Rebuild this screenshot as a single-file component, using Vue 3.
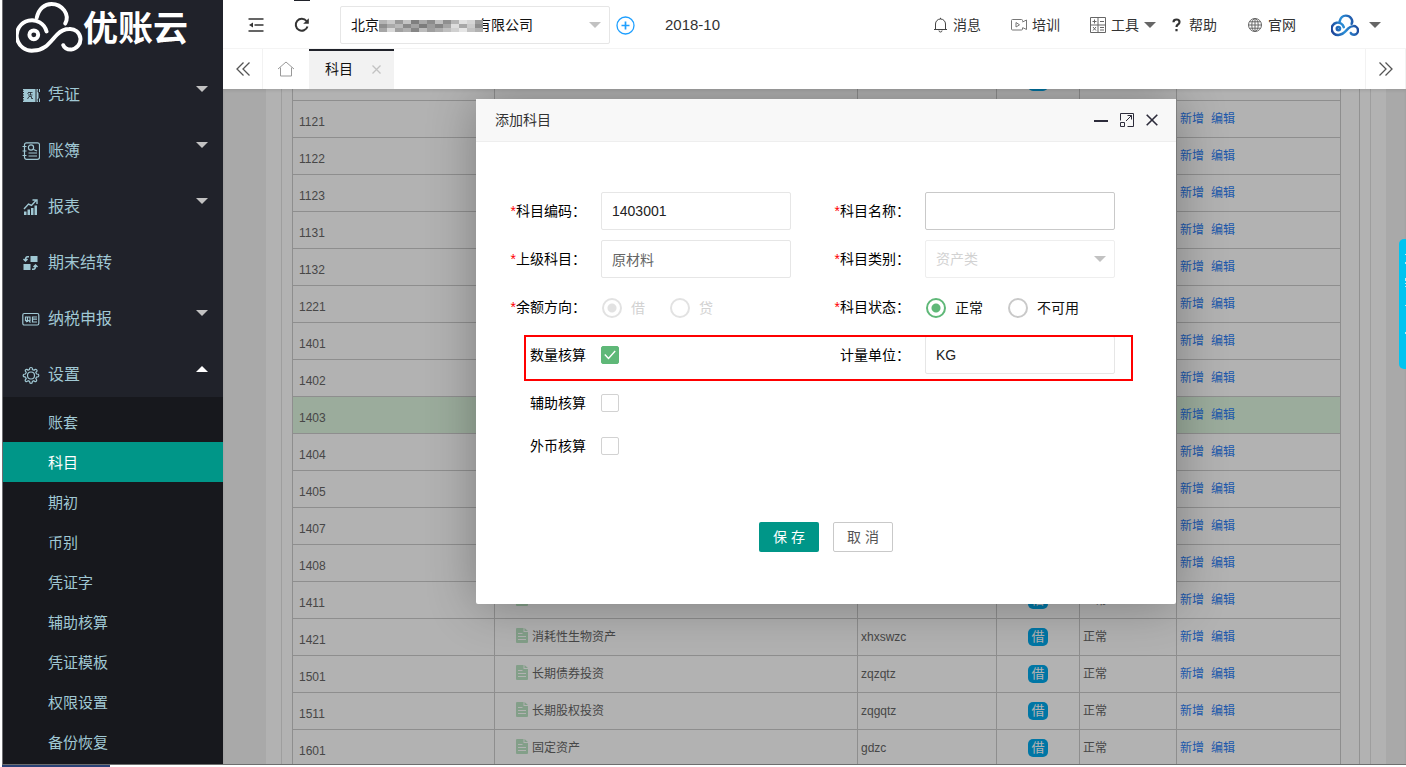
<script setup>
import { ref } from 'vue'

const menus = [
  { name: '凭证', icon: 'voucher', arrow: 'down' },
  { name: '账簿', icon: 'ledger', arrow: 'down' },
  { name: '报表', icon: 'report', arrow: 'down' },
  { name: '期末结转', icon: 'transfer', arrow: '' },
  { name: '纳税申报', icon: 'tax', arrow: 'down' },
  { name: '设置', icon: 'gear', arrow: 'up' }
]
const submenus = ['账套', '科目', '期初', '币别', '凭证字', '辅助核算', '凭证模板', '权限设置', '备份恢复']

const rows = [
  ['', '', ''],
  ['1121', '', ''],
  ['1122', '', ''],
  ['1123', '', ''],
  ['1131', '', ''],
  ['1132', '', ''],
  ['1221', '', ''],
  ['1401', '', ''],
  ['1402', '', ''],
  ['1403', '', ''],
  ['1404', '', ''],
  ['1405', '', ''],
  ['1407', '', ''],
  ['1408', '', ''],
  ['1411', '', ''],
  ['1421', '消耗性生物资产', 'xhxswzc'],
  ['1501', '长期债券投资', 'zqzqtz'],
  ['1511', '长期股权投资', 'zqgqtz'],
  ['1601', '固定资产', 'gdzc']
]

const mosaic = [
  '#b4b4b4', '#c9c9c9', '#999999', '#c4c4c4', '#7f7f7f', '#a9a9a9', '#8c8c8c', '#c0c0c0', '#8f8f8f', '#b5b5b5', '#e2e2e2', '#d6d6d6', '#9d9d9d',
  '#8f8f8f', '#aaaaaa', '#b9b9b9', '#8a8a8a', '#a2a2a2', '#7c7c7c', '#9b9b9b', '#858585', '#a5a5a5', '#dddddd', '#a8a8a8', '#cccccc', '#8d8d8d',
  '#a6a6a6', '#d8d8d8', '#a0a0a0', '#b0b0b0', '#868686', '#bcbcbc', '#9e9e9e', '#adadad', '#bfbfbf', '#d0d0d0', '#e6e6e6', '#c2c2c2', '#b1b1b1'
]

const code = ref('1403001')
const title = ref('')
const parent = ref('原材料')
const unit = ref('KG')
const direction = ref('debit')
const status = ref('normal')
const useQty = ref(true)
const useAux = ref(false)
const useFx = ref(false)
</script>

<template>
  <div class="desktop">
    <div class="window">
      <aside class="sidebar">
        <a class="brand" href="#">
          <svg class="brand-mark" viewBox="15 0 68 54" fill="none" stroke="#fff" stroke-width="4" stroke-linecap="round">
            <path d="M46 31A15.5 15.5 0 1 0 33 50.500C45 50.500 50 41 57 34C61 30 65 28.500 69 28.500A10.500 10.500 0 0 1 71 49.500C67 49.500 64 48 63 45" />
            <path d="M36 17C38 8 44 3 51 3C62 3 70 14 65 23" />
            <circle cx="33" cy="34.500" r="4.500" />
          </svg>
          <span>优账云</span>
        </a>
        <nav>
          <a v-for="m in menus" :key="m.name" class="menu" href="#">
            <span class="menu-label">
              <svg v-if="m.icon === 'voucher'" class="ico" viewBox="0 0 18 18">
                <path fill="currentColor" d="M1 3H13.500V16H1V14.500H2V13.500H1V12H2V11H1V9.500H2V8.500H1V7H2V6H1V4.500H2V4H1ZM14.500 3H16L15.500 5.500L16.500 7V12L15.500 13.500L16 16H14.500ZM17 3H18V6H17ZM17 12.500H18V16H17Z" />
                <path stroke="#20222a" stroke-width=".8" fill="none" d="M6.500 6.500H10.500M7 6L5.500 8M8.500 6.500V9M6 9H10.500M7 10.500H9.500V12.500H11M7 10.500L5.500 13" />
              </svg>
              <svg v-else-if="m.icon === 'ledger'" class="ico" viewBox="0 0 18 18" fill="none" stroke="currentColor" stroke-width="1.200">
                <rect x="2.500" y=".8" width="15" height="16.500" rx="2" />
                <path d="M.5 4.500h4M.5 9h4M.5 13.500h4M6.500 11h8.500M6.500 14h8.500M11.500 7.500l3.500 1.500" />
                <circle cx="9" cy="5.500" r="2.600" />
              </svg>
              <svg v-else-if="m.icon === 'report'" class="ico" viewBox="0 0 18 18">
                <path fill="currentColor" d="M2 13.500h2.500V17H2zM5.500 11.500H8V17H5.500zM9 10h2.500v7H9zM12.500 7.500H15V17h-2.500z" />
                <path fill="none" stroke="currentColor" stroke-width="1.400" d="M2 11l4.500-5 3 1.500 4.500-5M10.500 2h4.500v4" />
              </svg>
              <svg v-else-if="m.icon === 'transfer'" class="ico" viewBox="0 0 18 18">
                <path fill="currentColor" d="M8.500 2h7v6h-7zM1.500 10h7v6h-7z" />
                <path fill="none" stroke="currentColor" stroke-width="1.500" d="M7 2.800H5.500Q3.500 2.800 3.500 6M1.500 5l2 2 2-2M10 15.200h1.500q2 0 2-3.200M11.500 13l2-2 2 2" />
              </svg>
              <svg v-else-if="m.icon === 'tax'" class="ico" viewBox="0 0 18 18" fill="none" stroke="currentColor" stroke-width="1.200">
                <rect x=".8" y="3.500" width="16" height="11.500" rx="1.500" />
                <path d="M3.500 7h4.500v3.500H3.500zM5.500 7v5M4 12l1-1M7 11l1.500 1.500M10 7h5M10 9.200h5M10 12h5M10.500 6.500v6" />
              </svg>
              <svg v-else class="ico" viewBox="0 0 18 18" fill="none" stroke="currentColor" stroke-width="1.200">
                <path d="M7.600 3.500Q7.300 1.500 9 1.500T10.400 3.500L12.200 4.200Q13.600 2.600 14.700 3.800T13.800 6.300L14.500 8Q16.800 7.900 16.800 9.500T14.500 11L13.800 12.700Q15.300 14.300 14.200 15.300T11.800 14.700L10.400 15.400Q10.400 17.400 9 17.400T7.600 15.400L6.200 14.700Q4.700 16.200 3.600 15.200T4.200 12.700L3.500 11Q1.200 11 1.200 9.500T3.500 8L4.200 6.300Q2.600 4.800 3.700 3.800T6 4.200Z" />
                <circle cx="9" cy="9.500" r="3.500" />
              </svg>
              {{ m.name }}
            </span>
            <i v-if="m.arrow" :class="['arrow', m.arrow]"></i>
          </a>
          <div class="submenu">
            <a v-for="s in submenus" :key="s" href="#" :class="{ active: s === '科目' }">{{ s }}</a>
          </div>
        </nav>
      </aside>

      <main class="main">
        <header class="topbar">
          <button class="tool" aria-label="收起菜单">
            <svg width="16" height="14" viewBox="0 0 16 14" fill="none" stroke="#333" stroke-width="1.700">
              <path d="M.5 1h15M6.500 7h9M.5 13h15" />
              <path fill="#333" stroke="none" d="M1 7l4-2.500v5z" />
            </svg>
          </button>
          <button class="tool reload" aria-label="刷新">
            <svg width="16" height="16" viewBox="0 0 16 16" fill="none" stroke="#333" stroke-width="2">
              <path d="M13.500 9.500A6 6 0 1 1 12.500 4" />
              <path fill="#333" stroke="none" d="M14.800 1.200v5.600H9.200z" />
            </svg>
          </button>
          <div class="company">
            <select aria-label="公司">
              <option>北京　　　　　　　有限公司</option>
            </select>
            <svg class="mosaic" width="104" height="12" viewBox="0 0 104 12">
              <rect v-for="(c, i) in mosaic" :key="i" :x="(i % 13) * 8" :y="Math.floor(i / 13) * 4" width="8" height="4" :fill="c" />
            </svg>
            <i class="arrow down"></i>
          </div>
          <button class="add" aria-label="新建公司">
            <svg width="19" height="19" viewBox="0 0 19 19" fill="none" stroke="#1e9fff">
              <circle cx="9.500" cy="9.500" r="8.500" stroke-width="1.300" />
              <path stroke-width="1.700" d="M5.500 9.500h8M9.500 5.500v8" />
            </svg>
          </button>
          <span class="period">2018-10</span>
          <nav class="links">
            <a href="#">
              <svg width="16" height="16" viewBox="0 0 16 16" fill="none" stroke="#444">
                <path d="M2 12.500h13M3.500 12.500V7a5 5 0 0 1 10 0v5.500M8.500 2V.8M7 13.500a1.500 1.500 0 0 0 3 0" />
              </svg>消息</a>
            <a href="#">
              <svg width="16" height="16" viewBox="0 0 16 16" fill="none" stroke="#777">
                <path d="M11.500 4.500v-1q0-1-1-1h-9q-1 0-1 1v8.500q0 1 1 1h9q1 0 1-1v-1M11.500 5l4-2v9.500l-4-2M5 5.500v4.500l3.500-2.200z" />
              </svg>培训</a>
            <a href="#" class="tools">
              <svg width="16" height="16" viewBox="0 0 16 16" fill="none" stroke="#666">
                <path d="M.5.500h15v15H.5zM8 .5v15M.5 8h15M2.500 4.500h4M4.500 2.500v4M10 4.500h4M3 10l3 3.500M6 10l-3 3.500M10 10.500h4M10 13h4" />
              </svg>工具<i class="arrow down"></i></a>
            <a href="#">
              <svg width="16" height="16" viewBox="0 0 16 16" fill="none" stroke="#333" stroke-width="2.200">
                <path d="M5.500 5.200Q5.500 2.500 8.500 2.500t3 2.400Q11.500 6.600 9.900 7.500 8.500 8.400 8.500 10M8.500 12v2.300" />
              </svg>帮助</a>
            <a href="#">
              <svg width="16" height="16" viewBox="0 0 16 16" fill="none" stroke="#666">
                <circle cx="8" cy="8" r="6.500" />
                <ellipse cx="8" cy="8" rx="3.200" ry="6.500" />
                <path d="M8 1.500v13M1.500 8h13M2.500 4.800h11M2.500 11.200h11" />
              </svg>官网</a>
            <a href="#" class="account" aria-label="账户">
              <svg width="28" height="23" viewBox="15 0 68 54" fill="none" stroke="url(#cloud)" stroke-width="6" stroke-linecap="round">
                <defs>
                  <linearGradient id="cloud" gradientUnits="userSpaceOnUse" x1="15" y1="40" x2="83" y2="20">
                    <stop offset="0" stop-color="#1c3f94" />
                    <stop offset=".45" stop-color="#2a8fd8" />
                    <stop offset="1" stop-color="#1c3f94" />
                  </linearGradient>
                </defs>
                <path d="M46 31A15 15 0 1 0 33 50C45 50 50 41 57 34C61 30 65 28.500 69 28.500A10.500 10.500 0 0 1 71 49.500C67 49.500 64 48 63 45" />
                <path d="M36 17C38 8 44 3 51 3C62 3 70 14 65 23" />
                <circle cx="33" cy="34.500" r="4" />
              </svg>
              <i class="arrow down"></i>
            </a>
          </nav>
        </header>

        <div class="tabs">
          <button class="tab-btn" aria-label="向左">
            <svg width="16" height="16" viewBox="0 0 16 16" fill="none" stroke="#555" stroke-width="1.300"><path d="M8.500 1.500L2 8l6.500 6.500M14.500 1.500L8 8l6.500 6.500" /></svg>
          </button>
          <button class="tab-home" aria-label="主页">
            <svg width="18" height="16" viewBox="0 0 18 16" fill="none" stroke="#999"><path d="M1 8l8-7 8 7M3.500 6.500v8.500h11V6.500" /></svg>
          </button>
          <div class="tab">
            <span>科目</span>
            <button aria-label="关闭标签">
              <svg width="9" height="9" viewBox="0 0 9 9" stroke="#c2c2c2" stroke-width="1.300"><path d="M.5.500l8 8M8.500.500l-8 8" /></svg>
            </button>
          </div>
          <button class="tab-btn right" aria-label="向右">
            <svg width="16" height="16" viewBox="0 0 16 16" fill="none" stroke="#555" stroke-width="1.300"><path d="M1.500 1.500L8 8l-6.500 6.500M7.500 1.500L14 8l-6.500 6.500" /></svg>
          </button>
        </div>

        <section class="content">
          <div class="card">
            <div class="panel">
              <div class="grid-box">
                <table>
                  <colgroup>
                    <col class="c-code"><col><col class="c-py"><col class="c-dir"><col class="c-state"><col class="c-op">
                  </colgroup>
                  <tbody>
                    <tr v-for="(r, i) in rows" :key="i" :class="{ picked: r[0] === '1403' }">
                      <td class="code">{{ r[0] }}</td>
                      <td class="name">
                        <svg width="12" height="15" viewBox="0 0 12 15">
                          <path fill="#bce4c4" d="M1 0h6.500v4H12v10q0 1-1 1H1q-1 0-1-1V1q0-1 1-1zM8.500 0L12 3H8.500z" />
                          <path stroke="#fff" d="M2 5.500h4.500M2 8.500h8M2 11.500h8" />
                        </svg>{{ r[1] }}
                      </td>
                      <td>{{ r[2] }}</td>
                      <td class="dir"><span>借</span></td>
                      <td>正常</td>
                      <td><a href="#">新增</a><a href="#">编辑</a></td>
                    </tr>
                  </tbody>
                </table>
              </div>
            </div>
          </div>
          <div class="shade"></div>

          <div class="dialog" role="dialog" aria-label="添加科目">
            <div class="dialog-head">
              <span>添加科目</span>
              <div class="dialog-tools">
                <button aria-label="最小化"><svg width="14" height="14" viewBox="0 0 14 14"><path stroke="#2d2c3b" stroke-width="2" d="M0 8h14" /></svg></button>
                <button aria-label="最大化">
                  <svg width="14" height="14" viewBox="0 0 14 14" fill="none" stroke="#2d2c3b">
                    <path d="M.5 7.500V.500h13v13H7.500M.5 9.500h4v4h-4zM6 8l5.500-5.500M7.500 2.500h4v4" />
                  </svg>
                </button>
                <button aria-label="关闭"><svg width="12" height="12" viewBox="0 0 12 12"><path stroke="#2d2c3b" stroke-width="1.600" d="M.7.700l10.600 10.600M11.300.700L.7 11.300" /></svg></button>
              </div>
            </div>
            <form class="form" @submit.prevent>
              <div class="row">
                <label class="lab" for="f-code"><b>*</b>科目编码：</label>
                <input id="f-code" v-model="code" class="text">
                <label class="lab" for="f-name"><b>*</b>科目名称：</label>
                <input id="f-name" v-model="title" class="text focus">
              </div>
              <div class="row">
                <label class="lab" for="f-parent"><b>*</b>上级科目：</label>
                <input id="f-parent" v-model="parent" class="text muted">
                <label class="lab" for="f-type"><b>*</b>科目类别：</label>
                <div class="pick">
                  <select id="f-type" disabled><option>资产类</option></select>
                  <i class="arrow down"></i>
                </div>
              </div>
              <div class="row">
                <span class="lab"><b>*</b>余额方向：</span>
                <div class="radios off">
                  <label><input v-model="direction" type="radio" name="dir" value="debit" disabled>借</label>
                  <label><input v-model="direction" type="radio" name="dir" value="credit" disabled>贷</label>
                </div>
                <span class="lab"><b>*</b>科目状态：</span>
                <div class="radios">
                  <label><input v-model="status" type="radio" name="st" value="normal">正常</label>
                  <label><input v-model="status" type="radio" name="st" value="off">不可用</label>
                </div>
              </div>
              <div class="row marked">
                <label class="lab" for="f-qty">数量核算</label>
                <span class="check">
                  <input id="f-qty" v-model="useQty" type="checkbox">
                  <svg width="12" height="10" viewBox="0 0 12 10" fill="none" stroke="#fff" stroke-width="1.400"><path d="M.8 4.500l3.700 4 6.700-7.500" /></svg>
                </span>
                <label class="lab" for="f-unit">计量单位：</label>
                <input id="f-unit" v-model="unit" class="text">
              </div>
              <div class="row">
                <label class="lab" for="f-aux">辅助核算</label>
                <span class="check"><input id="f-aux" v-model="useAux" type="checkbox"></span>
              </div>
              <div class="row last">
                <label class="lab" for="f-fx">外币核算</label>
                <span class="check"><input id="f-fx" v-model="useFx" type="checkbox"></span>
              </div>
              <div class="actions">
                <button class="save" type="submit">保 存</button>
                <button class="cancel" type="button">取 消</button>
              </div>
            </form>
          </div>
        </section>

        <button class="helper" aria-label="客服">
          <svg width="1" height="130" viewBox="0 0 1 130" fill="#b9eefa">
            <path d="M0 15h1v1H0zM0 23h1v2H0zM0 39h1v3H0zM0 44h1v1H0zM0 47h1v1H0zM0 66h1v1H0zM0 93h1v2H0z" />
          </svg>
        </button>
      </main>
    </div>
    <div class="edge"></div>
  </div>
</template>

<style>
body { overflow: hidden; }
</style>

<style scoped>
.desktop, .desktop * { box-sizing: border-box; }
.desktop {
  display: flex;
  flex-direction: column;
  height: 100vh;
  padding-left: 2px;
  background: #fff;
  font: 14px/20px "Liberation Sans", "Noto Sans CJK SC", sans-serif;
  color: #333;
}
.window {
  flex: 1;
  min-height: 0;
  display: flex;
  overflow: hidden;
  border-left: 1px solid #6e6e72;
  border-bottom: 1px solid #6e6e6e;
}
.edge { height: 2px; width: 108px; background: #2a4277; }
a { color: inherit; text-decoration: none; }
button { font: inherit; color: inherit; border: 0; padding: 0; background: none; cursor: pointer; }
button svg, a svg, .check svg { display: block; }
input, select { font: inherit; margin: 0; }

.arrow { display: block; flex: none; border: 6px solid transparent; }
.arrow.down { border-top-color: #c2c2c2; border-bottom: 0; }
.arrow.up { border-bottom-color: #fff; border-top: 0; }

.sidebar { flex: none; width: 220px; background: #20222a; overflow: hidden; }
.brand {
  display: flex;
  align-items: center;
  height: 54px;
  margin-bottom: 7px;
  padding-left: 13px;
  color: #fff;
  font-size: 35px;
  line-height: 54px;
  font-weight: 700;
}
.brand span { padding-top: 4px; }
.brand-mark { width: 67px; height: 53px; }
.menu {
  display: flex;
  align-items: center;
  justify-content: space-between;
  height: 56px;
  padding: 0 15px 0 19px;
  color: #a0c8d4;
  font-size: 16px;
}
.menu-label { display: flex; align-items: center; gap: 8px; padding-top: 12px; }
.ico { width: 18px; height: 18px; }
.submenu { height: 400px; padding-top: 5px; background: #17181d; }
.submenu a {
  display: block;
  height: 40px;
  padding-left: 45px;
  line-height: 42px;
  font-size: 15px;
  color: #a0c8d4;
}
.submenu a.active { background: #009688; color: #fff; }

.main { position: relative; flex: 1; min-width: 0; display: flex; flex-direction: column; }
.topbar {
  flex: none;
  display: flex;
  align-items: center;
  height: 49px;
  padding: 2px 25px 0 10px;
  border-bottom: 1px solid #f4f4f4;
  background: #fff;
}
.tool { width: 46px; height: 46px; display: flex; align-items: center; justify-content: center; }
.reload::before { content: ""; position: absolute; top: 0; left: 71px; width: 16px; height: 1px; background: #20222a; }
.company { position: relative; width: 270px; margin: 0 6px 0 15px; }
.company select, .pick select {
  display: block;
  width: 100%;
  height: 38px;
  padding: 0 10px;
  border: 1px solid #e6e6e6;
  border-radius: 2px;
  background: #fff;
  appearance: none;
  color: #111;
}
.company .arrow, .pick .arrow { position: absolute; right: 9px; top: 16px; }
.mosaic { position: absolute; left: 39px; top: 14px; }
.period { margin-left: 30px; font-size: 15px; }
.links { display: flex; align-items: center; margin-left: auto; }
.links a { display: flex; align-items: center; gap: 5px; margin-left: 30px; white-space: nowrap; }
.links .arrow.down { border-top-color: #666; }
.links .tools + a { margin-left: 12px; }
.links .account { gap: 10px; margin-left: 35px; }

.tabs { flex: none; display: flex; height: 40px; background: #fff; }
.tab-btn, .tab-home { display: flex; align-items: center; justify-content: center; width: 40px; border-right: 1px solid #f2f2f2; }
.tab-home { width: 46px; border-right: 0; }
.tab {
  display: flex;
  align-items: center;
  justify-content: space-between;
  width: 85px;
  padding: 0 13px 2px 16px;
  border-top: 2px solid #20222a;
  background: #f2f2f2;
  color: #111;
}
.right { margin-left: auto; width: 41px; border-left: 1px solid #f2f2f2; }

.content { position: relative; flex: 1; min-height: 0; overflow: hidden; background: #f2f2f2; display: flex; }
.card { flex: 1; min-width: 0; margin: 0 20px 0 43px; padding: 0 15px; background: #fff; }
.panel { height: 100%; padding: 0 10px; border: solid #e2e2e2; border-width: 0 1px; overflow: hidden; }
.grid-box { display: flow-root; height: 100%; padding-right: 18px; border-right: 1px solid #d2d2d2; }
table { width: 100%; margin-top: -26px; border-collapse: collapse; table-layout: fixed; font-size: 12px; color: #666; }
.c-code { width: 202px; }
.c-py { width: 139px; }
.c-dir { width: 83px; }
.c-state { width: 97px; }
.c-op { width: 164px; }
td { height: 37px; padding: 0 3px; border: 1px solid #ccc; line-height: 18px; white-space: nowrap; }
.code { padding: 6px 6px 0; }
.name { padding-left: 21px; }
.name svg { margin-right: 4px; vertical-align: -2px; }
.dir { text-align: center; }
.dir span { display: inline-block; width: 20px; height: 18px; border-radius: 5px; background: #01aaed; color: #fff; font-size: 13px; }
td a { color: #2d80f5; margin-right: 7px; }
.picked { background: #def6e0; }
.shade { position: absolute; inset: 0; background: rgba(0, 0, 0, .3); box-shadow: inset 0 2px 3px rgba(0, 0, 0, .08); }

.dialog {
  position: absolute;
  top: 10px;
  left: 253px;
  width: 700px;
  border-radius: 2px;
  background: #fff;
  box-shadow: 1px 1px 50px rgba(0, 0, 0, .3);
}
.dialog-head {
  display: flex;
  align-items: center;
  justify-content: space-between;
  height: 43px;
  padding: 0 18px 0 19px;
  border-bottom: 1px solid #eee;
  background: #f8f8f8;
}
.dialog-tools { display: flex; align-items: center; gap: 12px; }
.form { padding: 50px 0 52px; color: #111; }
.row { position: relative; display: grid; grid-template-columns: 110px 190px 104px 190px; column-gap: 15px; height: 38px; margin-bottom: 10px; align-items: center; }
.row.last { margin-top: -5px; }
.lab { text-align: right; white-space: nowrap; color: #000; }
.lab b { font-weight: 400; color: #f00; }
.text { width: 100%; height: 38px; padding: 0 10px; border: 1px solid #e6e6e6; border-radius: 2px; background: #fff; color: #222; outline: 0; }
.text.focus { border-color: #c9c9c9; }
.text.muted { color: #666; }
.pick { position: relative; }
.pick select { border-color: #eee; color: #d2d2d2; opacity: 1; }
.radios { display: flex; gap: 25px; padding: 2px 0 0 1px; color: #111; }
.radios label { display: flex; align-items: center; gap: 9px; }
.radios input { appearance: none; width: 20px; height: 20px; border: 2px solid #c9c9c9; border-radius: 50%; }
.radios input:checked { border-color: #5fb878; background: radial-gradient(circle, #5fb878 4px, transparent 5px); }
.radios.off { color: #d2d2d2; }
.radios.off input { border-color: #e2e2e2; }
.radios.off input:checked { background: radial-gradient(circle, #e2e2e2 4px, transparent 5px); }
.check { position: relative; height: 18px; width: 18px; }
.check input { display: block; appearance: none; width: 18px; height: 18px; border: 1px solid #d2d2d2; border-radius: 2px; background: #fff; }
.check input:checked { border-color: #5fb878; background: #5fb878; }
.check svg { position: absolute; left: 3px; top: 4px; pointer-events: none; }
.marked::after { content: ""; position: absolute; inset: -1px 43px -7px 48px; border: 2px solid #f00; pointer-events: none; }
.actions { display: flex; justify-content: center; gap: 14px; margin-top: 57px; }
.actions button { width: 60px; height: 30px; border-radius: 2px; }
.actions .save { background: #009688; color: #fff; }
.actions .cancel { border: 1px solid #c9c9c9; background: #fff; color: #555; }

.helper { position: absolute; right: 0; top: 239px; width: 7px; height: 130px; border-radius: 5px 0 0 5px; background: #00c4f0; display: flex; justify-content: flex-end; }
</style>
